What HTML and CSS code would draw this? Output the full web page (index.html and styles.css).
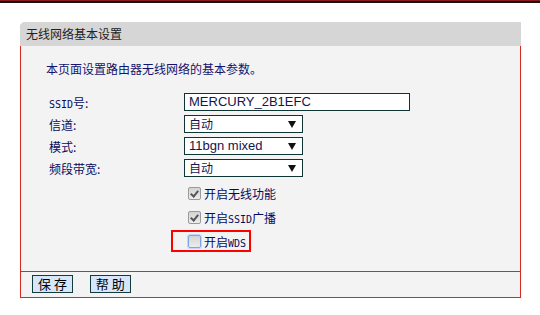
FILE: index.html
```
<!DOCTYPE html>
<html lang="zh-CN">
<head>
    <meta charset="UTF-8">
    <title>无线网络基本设置</title>
    <link rel="stylesheet" href="styles.css">
</head>
<body>
    <div class="topbar"></div>

    <div class="panel">
        <div class="panel-head">无线网络基本设置</div>

        <div class="panel-body">
            <p class="intro">本页面设置路由器无线网络的基本参数。</p>

            <div class="form">
                <div class="row">
                    <span class="label"><span class="mono">SSID</span>号:</span>
                    <div class="text-box">MERCURY_2B1EFC</div>
                </div>
                <div class="row">
                    <span class="label">信道:</span>
                    <div class="select-box">自动</div>
                </div>
                <div class="row">
                    <span class="label">模式:</span>
                    <div class="select-box latin">11bgn mixed</div>
                </div>
                <div class="row">
                    <span class="label">频段带宽:</span>
                    <div class="select-box">自动</div>
                </div>

                <div class="check-row">
                    <span class="check checked"></span>
                    <span class="check-text">开启无线功能</span>
                </div>
                <div class="check-row">
                    <span class="check checked"></span>
                    <span class="check-text">开启<span class="mono">SSID</span>广播</span>
                </div>
                <div class="check-row">
                    <div class="highlight">
                        <span class="check focus"></span>
                        <span class="check-text">开启<span class="mono">WDS</span></span>
                    </div>
                </div>
            </div>
        </div>

        <div class="panel-foot">
            <button class="btn">保 存</button>
            <button class="btn">帮 助</button>
        </div>
    </div>
</body>
</html>
```

FILE: styles.css
```
body {
    margin: 0;
    background-color: #fff;
    font-family: "Noto Sans CJK SC", "DejaVu Sans", sans-serif;
    font-size: 12px;
    color: #0a0a5a;
}

.mono {
    font-family: "DejaVu Sans Mono", monospace;
    font-size: 10px;
}

.topbar {
    height: 2px;
    border-top: 1px solid #8c1c1c;
    background-color: #141414;
}

.panel {
    width: 501px;
    margin: 19px 0 0 20px;
}

.panel-head {
    height: 24px;
    line-height: 24px;
    padding-left: 6px;
    background-color: #d6d6d6;
    color: #222;
    clip-path: polygon(3px 0, 100% 0, 100% 100%, 0 100%, 0 3px);
}

.panel-body {
    height: 210px;
    padding: 15px 0 0 25px;
    background-color: #f3f3f3;
    border-left: 1px solid #d42a1f;
    border-right: 1px solid #d42a1f;
}

.intro {
    margin: 0;
    line-height: 16px;
    color: #14146e;
}

.form {
    margin-top: 16px;
    padding-left: 3px;
}

.row {
    display: flex;
    align-items: center;
    height: 18px;
    margin-bottom: 4px;
}

.label {
    width: 135px;
}

.text-box, .select-box {
    box-sizing: border-box;
    height: 18px;
    line-height: 16px;
    padding-left: 4px;
    border: 1px solid #0f3434;
    background-color: #fff;
    color: #141450;
}

.text-box {
    width: 226px;
    font-family: "Liberation Sans", Arial, sans-serif;
    font-size: 13px;
}

.select-box {
    position: relative;
    width: 119px;
}

.select-box.latin {
    font-family: "Liberation Sans", Arial, sans-serif;
    font-size: 13px;
}

.select-box::after {
    content: "";
    position: absolute;
    right: 6px;
    top: 5px;
    border-left: 4px solid transparent;
    border-right: 4px solid transparent;
    border-top: 7px solid #111;
}

.check-row {
    display: flex;
    align-items: center;
    height: 24px;
    padding-left: 139px;
    white-space: nowrap;
}

.check-text {
    margin-left: 3px;
}

.check {
    box-sizing: border-box;
    position: relative;
    flex: none;
    width: 13px;
    height: 13px;
    border: 1px solid #9a9a9a;
    border-radius: 2px;
    background: linear-gradient(#d4d4d4, #ececec);
}

.check.checked::after {
    content: "";
    position: absolute;
    left: 3px;
    top: 1px;
    width: 3px;
    height: 6px;
    border-right: 2px solid #555;
    border-bottom: 2px solid #555;
    transform: rotate(40deg);
}

.check.focus {
    border: 1px solid #7aa6e6;
    box-shadow: 0 0 0 1px #c4d9f6;
}

.highlight {
    display: flex;
    align-items: center;
    box-sizing: border-box;
    width: 80px;
    height: 22px;
    margin-left: -17px;
    padding-left: 15px;
    border: 2px solid #ff0000;
}

.panel-foot {
    height: 22px;
    padding: 3px 0 0 11px;
    background-color: #f3f3f3;
    border: 1px solid #d42a1f;
}

.btn {
    box-sizing: border-box;
    width: 41px;
    height: 18px;
    margin-right: 14px;
    padding: 0;
    border: 1px solid #123c3c;
    background-color: #d8e6fc;
    font-family: "Noto Sans CJK SC", sans-serif;
    font-size: 13px;
    line-height: 16px;
    color: #000;
}
```
